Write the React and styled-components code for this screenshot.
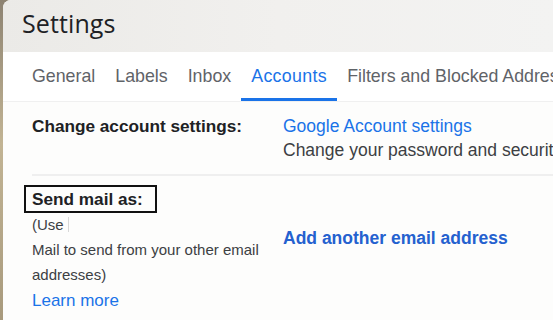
import styled, { createGlobalStyle } from "styled-components";

const GlobalStyle = createGlobalStyle`
  html, body {
    margin: 0;
    padding: 0;
    height: 320px;
    overflow: hidden;
  }
  body {
    font-family: "Liberation Sans", Arial, sans-serif;
    background: #b9ab8e;
  }
`;

const Screen = styled.div`
  display: flex;
  width: 553px;
  height: 320px;
  background: linear-gradient(180deg, #8d8372 0%, #c2b494 45%, #a89a7d 100%);
`;

const Panel = styled.div`
  flex: 1;
  margin-left: 3px;
  display: flex;
  flex-direction: column;
  background: #fdfdfc;
  border-top-left-radius: 8px;
  overflow: hidden;
`;

const Header = styled.div`
  height: 52px;
  display: flex;
  align-items: center;
  padding-left: 19px;
  background: linear-gradient(90deg, #ebeae7 0%, #f1f0ee 50%, #f3f3f2 100%);
`;

const Title = styled.h1`
  margin: 0 0 6px;
  font-family: "Open Sans", "Liberation Sans", sans-serif;
  font-size: 25px;
  font-weight: 400;
  color: #202124;
  letter-spacing: 0.1px;
`;

const TabBar = styled.nav`
  display: flex;
  padding-left: 19px;
  height: 49px;
  background: #fff;
  border-bottom: 1px solid #f0f0f0;
  white-space: nowrap;
`;

const Tab = styled.div`
  display: flex;
  align-items: center;
  padding: 3px 10px 0;
  font-size: 17.8px;
  letter-spacing: ${(p) => (p.$active ? "0.35px" : "0")};
  color: ${(p) => (p.$active ? "#1a73e8" : "#5f6368")};
  border-bottom: 3px solid ${(p) => (p.$active ? "#1a73e8" : "transparent")};
`;

const Content = styled.div`
  flex: 1;
  padding-left: 29px;
`;

const Row = styled.div`
  display: grid;
  grid-template-columns: 251px 1fr;
  padding: ${(p) => p.$pad || "13px 0 0"};
  height: ${(p) => p.$height || "auto"};
  box-sizing: border-box;
  border-bottom: ${(p) => (p.$divider ? "2px solid #efefef" : "none")};
  white-space: nowrap;
`;

const Label = styled.div`
  font-size: 17.2px;
  font-weight: 700;
  color: #202124;
  line-height: 24px;
`;

const Boxed = styled.span`
  display: inline-block;
  margin-left: -8px;
  padding: 1px 12px 1px 6px;
  border: 2px solid #111;
  line-height: 22px;
`;

const Hint = styled.div`
  margin-top: -1px;
  font-size: 15px;
  line-height: 25px;
  color: #3c4043;
  white-space: nowrap;
`;

const Caret = styled.span`
  display: inline-block;
  width: 1px;
  height: 15px;
  margin-left: 4px;
  vertical-align: -2px;
  background: #d8d8d8;
`;

const Link = styled.a`
  display: block;
  color: ${(p) => (p.$strong ? "#2461cf" : "#1a73e8")};
  font-size: ${(p) => (p.$size ? p.$size : "17.5px")};
  font-weight: ${(p) => (p.$strong ? 700 : 400)};
  line-height: 24px;
  text-decoration: none;
  margin-top: ${(p) => p.$top || "0"};
`;

const Value = styled.div`
  overflow: hidden;
`;

const Text = styled.div`
  font-size: 17.5px;
  line-height: 24px;
  color: #3c4043;
`;

const tabs = ["General", "Labels", "Inbox", "Accounts", "Filters and Blocked Addresses"];

export default function App() {
  return (
    <>
      <GlobalStyle />
      <Screen>
        <Panel>
          <Header>
            <Title>Settings</Title>
          </Header>
          <TabBar>
            {tabs.map((t) => (
              <Tab key={t} $active={t === "Accounts"}>
                {t}
              </Tab>
            ))}
          </TabBar>
          <Content>
            <Row $divider $height="74px" $pad="12px 0 0">
              <Label>Change account settings:</Label>
              <Value>
                <Link>Google Account settings</Link>
                <Text>Change your password and security options</Text>
              </Value>
            </Row>
            <Row $pad="9px 0 0">
              <div>
                <Label>
                  <Boxed>Send mail as:</Boxed>
                </Label>
                <Hint>
                  (Use<Caret />
                  <br />
                  Mail to send from your other email
                  <br />
                  addresses)
                </Hint>
                <Link $size="17px" $top="2px">Learn more</Link>
              </div>
              <Value>
                <Link $strong $top="41px">Add another email address</Link>
              </Value>
            </Row>
          </Content>
        </Panel>
      </Screen>
    </>
  );
}
